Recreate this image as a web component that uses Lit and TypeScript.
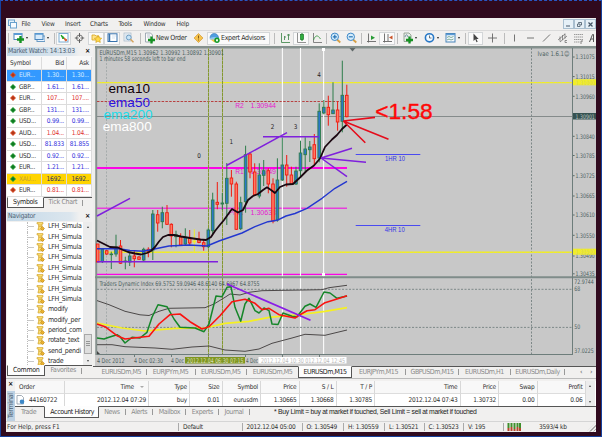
import { LitElement, css, html, nothing, svg } from 'lit';
import type { SVGTemplateResult } from 'lit';
import { customElement } from 'lit/decorators.js';
import { classMap } from 'lit/directives/class-map.js';

type Tool = { icon?: string; w: number; label?: string; pressed?: boolean; drop?: boolean; sep?: boolean };
type Quote = { symbol: string; bid: string; ask: string; up: boolean; mark?: 'selected' | 'gold' };
// x, high, low, body top, body bottom, colour key
type Candle = [number, number, number, number, number, 'g' | 'r' | 'y'];

const ICONS: Record<string, SVGTemplateResult> = {
  newChart: svg`<rect x="1" y="1.5" width="8" height="6" fill="#fff" stroke="#4b86bd"/><rect x="1" y="1" width="8" height="2" fill="#5b9bd5"/><path d="M7.5 4v7M4 7.5h7" stroke="#159222" stroke-width="2.4"/>`,
  profiles: svg`<rect x="3" y="4" width="8" height="5.5" fill="#eaf4ff" stroke="#6b9bc4"/><rect x="1" y="1.5" width="8" height="6" fill="#d8ebfb" stroke="#4b86bd"/><path d="M1 2h8" stroke="#5b9bd5" stroke-width="1.5"/>`,
  market: svg`<rect x="1" y="1.5" width="9" height="8.5" fill="#fff" stroke="#7bacd2"/><path d="M3 3l3 2.5-1 1.5z" fill="#20a020" stroke="#20a020"/><path d="M6 6l3 2-1.5 1z" fill="#d75a2c" stroke="#d75a2c"/>`,
  crosshair: svg`<circle cx="5.5" cy="6" r="3" fill="none" stroke="#666" stroke-width=".9"/><path d="M5.5 1v4M5.5 7v4M.8 6h3.7M6.5 6h3.7" stroke="#555" stroke-width=".9"/>`,
  navigator: svg`<path d="M1 3h3l1 1h3v4H1z" fill="#ffe58a" stroke="#d6a31d" stroke-width=".8"/><path d="M7 3.5l1.2 2.3 2.5.4-1.8 1.8.4 2.5L7 9.3l-2.2 1.2.4-2.5L3.4 6.2l2.5-.4z" fill="#ffd94a" stroke="#cf9a12" stroke-width=".6"/>`,
  terminal: svg`<rect x="1" y="1.8" width="9" height="7.7" fill="#fff" stroke="#3772ad"/><path d="M2.5 2v7.5" stroke="#3772ad" stroke-width="1.5"/><path d="M5 4h4M5 6h3" stroke="#c3d9ec" stroke-width=".7"/>`,
  tester: svg`<rect x="1" y="1" width="7" height="8" fill="#edf3f8" stroke="#a5b8c8" stroke-width=".7"/><path d="M2 5h5M2 3h5M2 7h4" stroke="#b6c9d8" stroke-width=".6"/><circle cx="5.8" cy="5.5" r="2.4" fill="#c8e4f7" stroke="#578db8" stroke-width=".8"/><path d="M7.5 7.3l3 3" stroke="#d5a45c" stroke-width="1.5"/>`,
  order: svg`<path d="M1.5 1h5l2 2v7h-7z" fill="#fafafa" stroke="#8b98a4" stroke-width=".8"/><path d="M3 3h3M3 5h4" stroke="#9ab" stroke-width=".7"/><path d="M7.5 4.5v7M4 8h7" stroke="#159222" stroke-width="2.3"/>`,
  alert: svg`<path d="M5.5 1.5l4.5 4.5-4.5 4.5L1 6z" fill="#f6c34c" stroke="#d49a34" stroke-width=".7"/><path d="M5.5 3.5v3M5.5 7.5v1" stroke="#845c19" stroke-width="1"/>`,
  expert: svg`<path d="M1 6c0-6 8.5-6 8.5 0z" fill="#4f9ee0" stroke="#2d70b5" stroke-width=".6"/><ellipse cx="5" cy="6.5" rx="4.5" ry="1.6" fill="#8ec6ef"/><path d="M1.5 7.5l4 3 2-3z" fill="#f4c646"/><circle cx="8" cy="8.3" r="2.7" fill="#159a2b"/><rect x="7" y="7.3" width="2" height="2" fill="#e9ffe9"/>`,
  bars: svg`<path d="M1.5 1v9.5H10M4.5 8V4M4.5 5h1.5M8.5 8V2M7 3h3" fill="none" stroke="#4b8d55" stroke-width=".9"/>`,
  candles: svg`<path d="M1.5 1v9.5H10" fill="none" stroke="#777" stroke-width=".8"/><path d="M6 1v8" stroke="#177a25"/><rect x="4.5" y="2.5" width="3" height="5" fill="#2eae3e" stroke="#177a25" stroke-width=".7"/>`,
  line: svg`<path d="M1.5 1v9.5H10" fill="none" stroke="#777" stroke-width=".9"/><path d="M1.5 8c2-5 4-5.5 7-1" fill="none" stroke="#3b9a45" stroke-width=".9"/>`,
  zoomIn: svg`<path d="M7 7.5l3.3 3" stroke="#d6a045" stroke-width="1.8"/><circle cx="4.8" cy="4.8" r="3.7" fill="#d5ecfb" stroke="#3d88c8"/><path d="M4.8 2.8v4M2.8 4.8h4" stroke="#2674b5" stroke-width="1.2"/>`,
  zoomOut: svg`<path d="M7 7.5l3.3 3" stroke="#d6a045" stroke-width="1.8"/><circle cx="4.8" cy="4.8" r="3.7" fill="#d5ecfb" stroke="#3d88c8"/><path d="M2.8 4.8h4" stroke="#2674b5" stroke-width="1.2"/>`,
  scroll: svg`<path d="M2.5 1.5v9M1 9.5h9" fill="none" stroke="#666" stroke-width=".9"/><path d="M5 3.5l4 2.2-4 2.2z" fill="#289b36"/>`,
  shift: svg`<path d="M2.5 1.5v9M1 9.5h9M6 2v7" fill="none" stroke="#666" stroke-width=".9"/><path d="M10.5 3.5v4L7 5.5z" fill="#ca5228"/>`,
  indicators: svg`<path d="M2 1h5l2 2v6.5H2z" fill="#e7ede7" stroke="#859585" stroke-width=".8"/><path d="M3 5c1-3 2-3 3 0" fill="none" stroke="#4c6f8b" stroke-width=".7"/><path d="M7.5 4.5v7M4 8h7" stroke="#159222" stroke-width="2.3"/>`,
  clock: svg`<circle cx="5.5" cy="5.8" r="4.1" fill="#f3faff" stroke="#2878c6" stroke-width="1.6"/><path d="M5.5 3.5V6H7.5" fill="none" stroke="#456" stroke-width=".8"/>`,
  template: svg`<rect x="1" y="1.5" width="9" height="8.5" fill="#f4faff" stroke="#4884b8"/><path d="M1 2.5h9" stroke="#5b9bd5" stroke-width="1.5"/><path d="M2 5.5l2-1 2 1 2.5-1M2 8l2-1 2 1 2.5-1" fill="none" stroke="#47886b" stroke-width=".7"/>`,
  cursor: svg`<path d="M3.5 1.5v7.5l1.8-1.7 1.2 3 1.2-.5-1.3-2.8h2.3z" fill="#444"/>`,
  cross: svg`<path d="M5.5 1.5v9M1 6h9" stroke="#666" stroke-width=".9"/>`,
  vline: svg`<path d="M5.5 2.5v7" stroke="#666" stroke-width=".9"/>`,
  hline: svg`<path d="M2 6h7" stroke="#666" stroke-width=".9"/>`,
  trend: svg`<path d="M2 9.5l7-7" stroke="#666" stroke-width=".9"/>`,
  channel: svg`<path d="M1 8l7-6M3 10l7-6M3 4.5v5M5.5 3v5M8 1.5v5" stroke="#666" stroke-width=".7"/><path d="M8 8.5h2M8 10.5h2M8 8.5v2" stroke="#555" stroke-width=".6"/>`,
  fibo: svg`<path d="M1 2.5h9M1 5h9M1 7.5h9M1 10h6" stroke="#777" stroke-width=".7" stroke-dasharray="1.4 .5"/><path d="M8 9v3M8 9h2" stroke="#555" stroke-width=".7"/>`,
  letter: svg`<path d="M1.5 10l3-7.5 1 0v7.5M3 7h2.5" fill="none" stroke="#555"/>`,
};

const TOOLS: Tool[] = [
  { sep: true, w: 4 }, { icon: 'newChart', w: 21, drop: true }, { icon: 'profiles', w: 21, drop: true }, { sep: true, w: 4 },
  { icon: 'market', w: 15, pressed: true }, { icon: 'crosshair', w: 17 }, { icon: 'navigator', w: 16, pressed: true },
  { icon: 'terminal', w: 16, pressed: true }, { icon: 'tester', w: 17 }, { sep: true, w: 6 },
  { icon: 'order', w: 47, label: 'New Order' }, { icon: 'alert', w: 17 }, { icon: 'expert', w: 63, label: 'Expert Advisors', pressed: true },
  { sep: true, w: 8 }, { icon: 'bars', w: 15 }, { icon: 'candles', w: 16, pressed: true }, { icon: 'line', w: 16 }, { sep: true, w: 2 },
  { icon: 'zoomIn', w: 16 }, { icon: 'zoomOut', w: 16 }, { sep: true, w: 4 }, { icon: 'scroll', w: 16 },
  { icon: 'shift', w: 16, pressed: true }, { sep: true, w: 4 }, { icon: 'indicators', w: 21, drop: true },
  { icon: 'clock', w: 22, drop: true }, { icon: 'template', w: 20, drop: true }, { sep: true, w: 6 },
  { icon: 'cursor', w: 15, pressed: true }, { icon: 'cross', w: 19 }, { sep: true, w: 4 }, { icon: 'vline', w: 16 },
  { icon: 'hline', w: 16 }, { icon: 'trend', w: 16 }, { icon: 'channel', w: 16 }, { icon: 'fibo', w: 16 }, { icon: 'letter', w: 14 },
];

const MENU: [string, number][] = [
  ['File', 20], ['View', 23.5], ['Insert', 25], ['Charts', 28.5], ['Tools', 25], ['Window', 33], ['Help', 20],
];

const QUOTES: Quote[] = [
  { symbol: 'EUR...', bid: '1.30...', ask: '1.30...', up: false, mark: 'selected' },
  { symbol: 'GBP...', bid: '1.61...', ask: '1.61...', up: true },
  { symbol: 'EUR...', bid: '107....', ask: '107....', up: false },
  { symbol: 'GBP...', bid: '131....', ask: '131....', up: true },
  { symbol: 'USD...', bid: '0.99...', ask: '0.99...', up: true },
  { symbol: 'AUD...', bid: '1.04...', ask: '1.04...', up: false },
  { symbol: 'USD...', bid: '81.833', ask: '81.855', up: true },
  { symbol: 'USD...', bid: '0.92...', ask: '0.92...', up: true },
  { symbol: 'EUR...', bid: '1.21...', ask: '1.21...', up: true },
  { symbol: 'XAU...', bid: '1692..', ask: '1692..', up: true, mark: 'gold' },
  { symbol: 'EUR...', bid: '0.81...', ask: '0.81...', up: false },
];

const SCRIPTS = [
  ...Array(8).fill('LFH_Simula'), 'modify', 'modify_per', 'period_com', 'rotate_text', 'send_pendi', 'trade',
];

const CANDLES: Candle[] = [
  [97.7, 244, 262, 244, 262, 'r'], [102.3, 248, 263, 249.3, 261.7, 'g'], [106.7, 250, 255, 250.7, 254, 'r'],
  [111.3, 251.7, 269, 254, 254.7, 'g'], [116, 234.7, 256.7, 247.3, 254, 'g'], [120.5, 240, 264, 246, 263.3, 'r'],
  [125.3, 256.7, 269.3, 261, 261.7, 'g'], [129.7, 252.3, 266, 256, 262, 'g'], [134.3, 250, 267.3, 256, 258.7, 'r'],
  [139, 256, 260, 257, 259.3, 'r'], [143.7, 247.7, 261.7, 249.3, 260, 'g'], [148.3, 247.3, 257.3, 249.3, 252, 'r'],
  [152.8, 210, 260, 214, 250, 'g'], [157.7, 210, 231.7, 214.7, 223, 'r'], [162.3, 206.7, 228.3, 212.7, 221.7, 'g'],
  [167, 205, 225, 212.7, 224.3, 'r'], [171.3, 223.3, 247.3, 224.3, 236, 'r'], [176, 230.7, 247.3, 234.7, 236.7, 'g'],
  [180.7, 233.3, 246, 237, 245, 'r'], [185.3, 228.3, 245.3, 237.3, 244, 'g'], [189.7, 230, 245, 238, 243, 'r'],
  [194.3, 229.3, 251.7, 241, 242, 'y'], [199, 231.7, 243.3, 239, 242.5, 'r'], [203.7, 240, 250.7, 242.7, 246.7, 'r'],
  [208.3, 228.3, 248.3, 230, 246.7, 'g'], [212.7, 192.7, 234, 200, 230.7, 'g'], [217.3, 182, 209.3, 202.3, 204.3, 'r'],
  [222.3, 193, 210, 203, 204, 'g'], [226.8, 163, 225, 178.3, 203.3, 'g'], [231.4, 170, 196.7, 178, 184, 'r'],
  [236.3, 181.7, 230, 184, 229.3, 'r'], [240.7, 196.7, 230, 202.7, 228.7, 'g'], [245.6, 145.7, 212.7, 154.7, 201.7, 'g'],
  [250, 152.3, 178.3, 154, 172, 'r'], [254.7, 163.3, 196, 172, 195, 'r'], [259.3, 163.3, 198.3, 175, 196, 'g'],
  [263.7, 160, 186, 170.7, 175.3, 'g'], [268.3, 168.3, 193.3, 170.7, 184, 'r'], [273, 178.3, 223.3, 184, 221, 'r'],
  [277.4, 158.3, 221.7, 180, 220, 'g'], [282.3, 137.3, 181, 165, 180, 'g'], [286.7, 155, 186.7, 165, 175, 'r'],
  [291.4, 166.7, 185, 175, 184, 'r'], [296, 166.7, 185, 171, 184, 'g'], [300.5, 140.7, 176.7, 153, 170.7, 'g'],
  [305.2, 137.3, 171.7, 149, 154.7, 'g'], [309.8, 141, 162, 147, 149.7, 'g'], [314.3, 134, 165.7, 144.7, 158.7, 'r'],
  [319.2, 103.3, 162.3, 111.3, 158, 'g'], [323.8, 100, 114.3, 107.3, 113, 'g'], [328.3, 95.7, 125.7, 107.3, 114.7, 'r'],
  [333, 82.3, 114, 110, 113.7, 'g'], [337.6, 101.3, 130.7, 110, 122, 'r'], [342.3, 60.7, 132.3, 95.3, 121.3, 'g'],
  [346.8, 84.7, 117.3, 95.3, 116.7, 'r'],
];

const EMA_FAST = '97,240.5 104,244 110,247 118,247.5 123,250 128,252 135,253.5 141,254.5 147,253 151,251 155,247 159,241.5 163,237 168,235 174,235 181,236.5 190,238 200,239.5 206,240 211,237 215,231 219,226 224,220 229,213 232,209 238,212.5 243,210 248,200 253,196 258,194 263,190 267,187.3 271,190 275,193 280,187 286,184.5 293,184 300,177.5 307,170.5 314,165.5 320,158.5 325,147 332,139.5 337,135 342,129 347,124.5';
const EMA_SLOW = '97,248.7 119,248.7 130,250.5 143,251.3 152,249.5 169,246 189,245 207,246 219,241 232,236.5 242,233 255,226.7 268,221.7 277,220.3 286,216 295,213.5 307,208.3 322,198.3 335,188.3 347,181.3';

const AXIS: [string, number][] = [
  ['1.31075', 57], ['1.31015', 76.6], ['1.30960', 96.3], ['1.30840', 136.3], ['1.30785', 155.5], ['1.30725', 175.7],
  ['1.30665', 196], ['1.30610', 215], ['1.30550', 235.3], ['1.30490', 256], ['1.30435', 273.8],
];

const CHART_TABS: [string, number][] = [
  ['EURUSDm,M5', 49.5], ['EURJPYm,M5', 49], ['EURUSDm,M5', 51.5], ['EURUSDm,M5', 51], ['EURUSDm,M15', 54],
  ['EURJPYm,M15', 54], ['GBPUSDm,M15', 53], ['EURUSDm,H1', 52], ['EURUSDm,Daily', 54],
];

const ORDER_COLS: [string, string, number][] = [
  ['Order', '44160722', 50], ['Time', '2012.12.04 07:29', 84], ['Type', 'buy', 41], ['Size', '0.01', 32.5],
  ['Symbol', 'eurusdm', 38.5], ['Price', '1.30665', 38.5], ['S / L', '1.30668', 37], ['T / P', '1.30785', 38.5],
  ['Time', '2012.12.04 07:43', 85.5], ['Price', '1.30732', 38.5], ['Swap', '0.00', 38.5], ['Profit', '0.06', 48],
];

const STATUS: [string, number][] = [
  ['For Help, press F1', 173], ['Default', 63.5], ['2012.12.04 05:00', 60], ['O: 1.30549', 41.5], ['H: 1.30559', 41],
  ['L: 1.30521', 39.5], ['C: 1.30523', 39.5], ['V: 195', 40],
];

// Text squeezed to an exact width, centred vertically on y.
const label = (text: string, x: number, y: number, width: number, fill = '#4c5f5f', size = 6.5) => svg`
  <text x=${x} y=${y + size * 0.36} font-size=${size} textLength=${width} lengthAdjust="spacingAndGlyphs" fill=${fill}>${text}</text>`;

@customElement('price-chart')
export class PriceChart extends LitElement {
  static override styles = css`
    :host {
      display: block;
      height: 321px;
    }

    svg {
      display: block;
      font-family: 'DejaVu Sans Condensed', 'DejaVu Sans', sans-serif;
      letter-spacing: 0;
    }

    .arial {
      font-family: 'Liberation Sans', Arial, sans-serif;
    }

    .big {
      stroke: #ff0808;
      stroke-width: 0.4;
    }

    polyline,
    .line {
      fill: none;
      stroke-linejoin: round;
    }
  `;

  protected override render() {
    return html`
      <svg width="503" height="321" viewBox="93 45 503 321">
        <rect x="93" y="45" width="503" height="321" fill="#eeeeec" />
        <rect x="95" y="46" width="501" height="320" fill="#c8c8c8" />
        <path d="M95 47.3H596" stroke="#84908d" stroke-width="2.4" />
        <path d="M96.3 46V355" stroke="#84908d" stroke-width="1.8" />
        ${this.renderGuides()}
        ${this.renderTexts()}
        ${CANDLES.map((c) => this.renderCandle(c))}
        <polyline points=${EMA_SLOW} stroke="#2337cf" stroke-width="1.4" />
        <polyline points=${EMA_FAST} stroke="#1a0710" stroke-width="1.8" />
        ${this.renderDrawings()}
        ${this.renderIndex()}
        ${this.renderAxes()}
      </svg>
    `;
  }

  private renderGuides() {
    return svg`
      <path d="M106.5 49V354" stroke="#a2a8a8" stroke-width=".9" stroke-dasharray="2 1.5" />
      <path d="M531.5 48V354" stroke="#748080" stroke-width=".9" stroke-dasharray="2 1.5" />
      <path d="M97 116.5H572" stroke="#858b8b" />
      <path d="M97 101.5H346" stroke="#b84040" stroke-width="1" stroke-dasharray="2.5 1.3" />
      <path d="M97 82.6H572M97 252.3H572" stroke="#f1ee25" stroke-width="1.4" />
      <path d="M97 82.6H572M97 252.3H572" stroke="#d9d672" stroke-width=".6" stroke-dasharray="1 3" />
      <path d="M97 168H347" stroke="#fb05e6" stroke-width="1.8" />
      <path d="M97 208.2H347" stroke="#e63edb" stroke-width="1.4" />
      <path d="M97 274.4H347" stroke="#fb05e6" stroke-width="1.3" />
      <path d="M208.5 48V354M222.5 48V354" stroke="#83982f" />
      <path d="M208.5 48V354M222.5 48V354" stroke="#a4ad72" stroke-dasharray="1 3" />
      <path d="M282.4 48V354M300.5 48V354M323.6 48V354" stroke="#fbfbfb" stroke-width="1.1" />
      <rect x="322" y="48" width="3" height="3" fill="#fff" />
      <rect x="322" y="273" width="3" height="3" fill="#fff" />
      <path d="M349.5 48h6l-3 3.5z" fill="#5f6868" />
    `;
  }

  private renderTexts() {
    return svg`
      ${label('EURUSDm,M15  1.30962 1.30992 1.30892 1.30901', 99.5, 52.3, 124.5)}
      ${label('1 minutes 58 seconds left to bar end', 99.5, 58.8, 86)}
      ${label('Ivae 1.6.1☺', 537.5, 53.3, 32)}
      <g class="arial">
        ${label('ema10', 108.5, 88.3, 41.5, '#100008', 13.5)}
        ${label('ema50', 108.5, 102, 41.5, '#2a12e0', 13.5)}
        ${label('ema200', 103.5, 114, 49, '#22dcea', 13.5)}
        ${label('ema800', 102.7, 126, 49, '#ffffff', 13.5)}
        ${label('R2', 235.3, 105.8, 8.5, '#e619d0', 6.8)}
        ${label('1.30944', 250.5, 105.8, 25.5, '#e619d0', 6.8)}
        ${label('R1', 235.3, 171.5, 8.5, '#e619d0', 6.8)}
        ${label('1.30749', 250.5, 171.5, 25.5, '#e619d0', 6.8)}
        ${label('Pivot', 229, 212.7, 14, '#e619d0', 6.8)}
        ${label('1.30638', 250.5, 212.7, 25.5, '#e619d0', 6.8)}
        ${label('1HR 10', 385, 158.6, 20, '#3434e4', 6.3)}
        ${label('4HR 10', 384.7, 229.6, 20, '#3434e4', 6.3)}
        <g class="big">${label('<1:58', 375.2, 111.3, 57.5, '#ff0808', 22.5)}</g>
      </g>
      ${label('0', 197.3, 155.5, 3.6, '#222', 6.5)}
      ${label('1', 229.5, 141.5, 3.6, '#222', 6.5)}
      ${label('2', 270.7, 126.5, 3.6, '#222', 6.5)}
      ${label('3', 293.7, 126.5, 3.6, '#222', 6.5)}
      ${label('4', 317.3, 74.5, 3.6, '#222', 6.5)}
    `;
  }

  private renderCandle([x, high, low, top, bottom, key]: Candle) {
    const edge = { g: '#2e7d4b', r: '#f01a10', y: '#f1ee25' }[key];
    const body = { g: '#2b78c8', r: '#ff7a62', y: '#f1ee25' }[key];
    return svg`
      <path d=${`M${x} ${high}V${low}`} stroke=${edge} stroke-width="1" />
      <rect x=${x - 1.3} y=${top} width="2.6" height=${Math.max(0.6, bottom - top)} fill=${body} stroke=${edge} stroke-width=".9" />
    `;
  }

  private renderDrawings() {
    return svg`
      <g class="line" stroke="#7f20dc" stroke-width="1.5">
        <path d="M97 216L130 198.3M226.5 165.5L287 132.7M263 136.7H319M97 261.7H218" />
        <path d="M321 158L352 148.3M321 158L366 162.2M321 158L347 176.7" />
      </g>
      <path class="line" d="M343.3 121L375 117.4M343.3 121L388.5 139.3M343.3 121L365.3 142.8" stroke="#e50d1c" stroke-width="1.6" />
      <path d="M355.7 154.5H420.3M355.7 225.5H420.3" stroke="#4a4af0" />
    `;
  }

  private renderIndex() {
    return svg`
      <path d="M95 277.3H596" stroke="#7f8c8a" stroke-width="2" />
      <path d="M97 289.3H572M97 327.4H572" stroke="#748181" stroke-width=".9" stroke-dasharray="2 1.5" />
      ${label('Traders Dynamic Index 69.5752 59.0946 48.6140 64.6967 64.8755', 99.5, 283.3, 160)}
      <g stroke="#4c4848" stroke-width="1">
        <polyline points="97,300.6 109,304.7 125,311.3 140,314.8 149,315.5 159,311.3 169,308.3 205,307.7 214,304 225,297.3 230,294 240,295 249,292.3 262,290.7 322,289.7 329,287.7 347,285.3" />
        <polyline points="97,344.7 112,344.7 125,346.7 155,348 172,349.3 192,347 209,346 225,350 245,351.3 259,349 272,343.3 292,338 305,334.3 325,335.3 347,330" />
      </g>
      <polyline points="97,323 122,328 145,331 175,328.3 205,328 225,323.3 249,321.3 269,317.3 305,314 325,311.3 347,307.7" stroke="#f5f022" stroke-width="1.7" />
      <polyline points="97,338 104,339 109,337.3 117,334.7 120,336.7 125,343 132,337.3 140,338 147,332.3 152,317.3 158,304.7 167,306.7 174,319 180,327.3 195,328 204,331.7 209,324 216,296 222,296.7 227,287.3 231,286.7 235,307.3 240.7,321.3 245,304 249,298.3 255,310.7 259,313 264,308 269,310.7 272,324 278,324.5 283,313 292,316.3 297,316.7 305,306.3 310,304 316,307.3 324,292 330,293 337,298.3 347,296" stroke="#16862a" stroke-width="1.5" />
      <polyline points="97,324 105,326.7 117,335.7 125,339 149,336.3 159,324 170,314.7 180,314 190,321.7 202,329 209,326.7 220,315.7 232,301.7 245,299.3 255,303.3 262,309.7 269,308.3 279,314.7 295,318 300,314.7 307,310.7 315,309.7 325,302.7 337,299 347,295.7" stroke="#fb1210" stroke-width="1.6" />
      <path d="M227 284L310.5 320.2" stroke="#8a1de6" stroke-width="1.7" />
    `;
  }

  private renderAxes() {
    return svg`
      <path d="M97 354.5H573M572.5 48V355" stroke="#6d7d7b" fill="none" />
      <path d="M97 351l3 3h-3z" fill="#444" />
      <path d="M134.5 355v2M171.5 355v2M208.5 355v2M245.5 355v2M282.5 355v2M319.5 355v2" stroke="#6d7d7b" />
      ${AXIS.map(([text, y]) => svg`<path d=${`M573 ${y}h1.6`} stroke="#5c6d6b" />${label(text, 575.6, y, 19.2, '#4c5f5f', 6.2)}`)}
      <rect x="573" y="79.3" width="23" height="6" fill="#f1ee25" />
      ${label('1.31000', 575.6, 82.8, 19.2, '#d9d36a', 6)}
      <rect x="573" y="248.7" width="23" height="6" fill="#f1ee25" />
      ${label('1.30500', 575.6, 251.4, 19.2, '#d9d36a', 6)}
      <rect x="573" y="113" width="23" height="6.5" fill="#365251" />
      ${label('1.30901', 575.6, 116.3, 19.2, '#b9c4c2', 6.2)}
      ${label('72.9744', 574.3, 281.7, 19.5, '#4c5f5f', 6.2)}
      ${label('68', 574.3, 289.2, 6, '#4c5f5f', 6.2)}
      ${label('50', 574.3, 327, 6, '#4c5f5f', 6.2)}
      ${label('37.0225', 574.3, 351.2, 19.5, '#4c5f5f', 6.2)}
      ${label('4 Dec 2012', 97, 360.3, 27.5)}
      ${label('4 Dec 02:30', 134, 360.3, 29)}
      ${label('4 Dec', 171, 360.3, 13)}
      <rect x="185" y="357" width="60" height="6.5" fill="#7f961f" />
      ${label('2012.12.04 06:30 07:15', 187, 360.3, 56.5, '#d9dfb8')}
      ${label('4 Dec', 246, 360.3, 12)}
      <rect x="258.5" y="357" width="88" height="6.5" fill="#fff" />
      ${label('2012.12.04 10:30 012.12.04 12:45', 261, 360.3, 84, '#b9b9b9')}
    `;
  }
}

@customElement('app-root')
export class AppRoot extends LitElement {
  static override styles = css`
    :host {
      display: block;
      box-sizing: border-box;
      width: 602px;
      height: 437px;
      padding: 17px 5px 4px 5px;
      overflow: hidden;
      background: #300a1e;
      border: 1px solid #16409c;
      border-top: 1px dashed #2856c4;
      font: 6.5px/1 'DejaVu Sans Condensed', 'DejaVu Sans', sans-serif;
      letter-spacing: -0.2px;
      color: #303030;
      white-space: nowrap;
    }

    * {
      box-sizing: border-box;
    }

    .window {
      display: flex;
      flex-direction: column;
      width: 590px;
      height: 414px;
      background: #f1f0ef;
      overflow: hidden;
    }

    .menu {
      display: flex;
      align-items: center;
      height: 12px;
      flex: none;
    }

    .menu > svg {
      margin: 0 5px 0 1.5px;
    }

    .item {
      padding-top: 1px;
    }

    .spacer {
      flex: 1;
    }

    .winbtn {
      display: grid;
      place-items: center;
      width: 11px;
      height: 10px;
      border: 1px solid #a9bfd0;
      background: #e6f0f7;
    }

    .toolbar {
      display: flex;
      align-items: center;
      height: 15px;
      flex: none;
      border-top: 1px solid #dadada;
      overflow: hidden;
    }

    .tool {
      display: flex;
      align-items: center;
      justify-content: center;
      flex: none;
      height: 13px;
    }

    .tool.pressed {
      background: #fafafa;
      border: 1px solid #d3d6d8;
    }

    .tool.labelled {
      justify-content: flex-start;
      gap: 1.5px;
      padding-left: 0.5px;
      font-size: 7px;
      letter-spacing: -0.35px;
    }

    .tool.sep::before {
      content: '';
      width: 1px;
      height: 11px;
      background: #bcbcbc;
    }

    .drop {
      margin-left: 2px;
      border: 1.7px solid transparent;
      border-top: 2px solid #222;
      border-bottom: 0;
    }

    .middle {
      display: flex;
      height: 333px;
      flex: none;
    }

    .side {
      display: flex;
      flex-direction: column;
      width: 87px;
      flex: none;
      padding: 1.5px 1px 0;
    }

    .title {
      display: flex;
      align-items: center;
      justify-content: space-between;
      height: 9px;
      flex: none;
      padding: 1px 2px 0 1px;
      background: linear-gradient(90deg, #c4d9e8, #dce6ee 75%, #f0f0f0 85%);
      color: #4e6274;
      font-size: 6.8px;
      letter-spacing: -0.3px;
    }

    .close {
      color: #111;
      font-weight: bold;
      font-size: 7px;
    }

    .quote {
      display: grid;
      grid-template-columns: 35px 25px 25px;
      height: 11.5px;
      flex: none;
      background: #fff;
      border-bottom: 1px solid #dcdcdc;
      color: #3030dc;
    }

    .quote > span {
      display: flex;
      align-items: center;
      justify-content: flex-end;
      padding-right: 2px;
      border-right: 1px solid #dcdcdc;
    }

    .quote > .sym {
      justify-content: flex-start;
      gap: 3px;
      padding-left: 3px;
      color: #333;
    }

    .quote.head {
      height: 14.5px;
      padding-top: 1px;
      color: #333;
      background: #f8f8f8;
    }

    .quote.down {
      color: #e03030;
    }

    .quote.selected {
      background: #3399ff;
    }

    .quote.selected,
    .quote.selected .sym {
      color: #cfeaff;
    }

    .quote.gold {
      background: #ffd400;
      color: #222c66;
    }

    .quote.gold .sym {
      color: #c4a23c;
    }

    .tabs {
      display: flex;
      height: 11px;
      flex: none;
      border-top: 1px solid #555;
      color: #8a8a8a;
    }

    .tabs > span {
      display: flex;
      align-items: center;
      padding: 0 5px;
      font-size: 7px;
      letter-spacing: -0.32px;
    }

    .tabs .on {
      margin-top: -1px;
      background: #fdfdfd;
      border: 1px solid #555;
      border-top-color: #fdfdfd;
      color: #222;
    }

    .quotes-tabs {
      margin-bottom: 4px;
    }

    .bar {
      width: 1px;
      height: 6px;
      margin: 2px 0 0;
      background: #999;
      flex: none;
    }

    .nav {
      display: flex;
      height: 143px;
      flex: none;
      margin-top: 1px;
      overflow: hidden;
      background: #fff;
    }

    .tree {
      width: 76px;
      padding: 0 0 0 20px;
      overflow: hidden;
    }

    .leaf {
      display: flex;
      align-items: center;
      height: 10.4px;
      font-size: 7px;
      border-left: 1px dotted #bbb;
      letter-spacing: -0.3px;
    }

    .leaf::before {
      content: '';
      width: 6px;
      height: 1px;
      margin-right: 2px;
      flex: none;
      background: #c8c8c8;
    }

    .leaf svg {
      flex: none;
      margin-right: 3px;
    }

    .scroll {
      display: flex;
      flex-direction: column;
      align-items: center;
      width: 9px;
      background: #ececec;
      padding: 4px 0 3px;
    }

    .up,
    .dn {
      border: 1.8px solid transparent;
      border-bottom: 2px solid #444;
      border-top: 0;
    }

    .dn {
      border-top: 2px solid #444;
      border-bottom: 0;
    }

    .thumb {
      display: grid;
      place-items: center;
      width: 8px;
      height: 20px;
      margin: auto 0 6px;
      border: 1px solid #a8a8a8;
      background: #dedede;
    }

    .chart {
      display: flex;
      flex-direction: column;
      width: 503px;
    }

    .chart .tabs {
      height: 12px;
      padding-left: 4px;
    }

    .chart .tabs > span {
      justify-content: center;
      flex: none;
      padding: 0;
      height: 11px;
      letter-spacing: -0.45px;
    }

    .chart .tabs .on {
      height: 12px;
    }

    .chart .tabs > .spacer {
      flex: 1;
    }

    .chart .tabs > .arrow {
      width: 10px;
      color: #555;
    }

    .bottom {
      display: flex;
      height: 43px;
      flex: none;
      border-top: 1px solid #bbb;
    }

    .strip {
      display: flex;
      flex-direction: column;
      align-items: center;
      justify-content: space-between;
      width: 9px;
      padding: 2px 0 0;
    }

    .strip .name {
      display: grid;
      place-items: center;
      width: 8px;
      height: 30px;
      writing-mode: vertical-rl;
      transform: rotate(180deg);
      background: #bdd1e3;
      color: #4e6274;
      font-size: 7px;
    }

    .history {
      width: 581px;
      padding-top: 2px;
    }

    .table {
      display: flex;
      height: 25px;
      background: #fff;
    }

    .col > div {
      display: flex;
      align-items: center;
      justify-content: flex-end;
      height: 12px;
      padding-right: 2px;
      border-right: 1px solid #d8d8d8;
    }

    .col > div:first-child {
      height: 13px;
      background: #f8f8f8;
      border-bottom: 1px solid #ddd;
    }

    .col:first-child > div {
      justify-content: flex-start;
      padding-left: 4px;
    }

    .col:first-child > div + div {
      padding-left: 1px;
      gap: 4px;
    }

    .sort {
      margin: 0 2px 0 6px;
      border: 2px solid transparent;
      border-top: 2.5px solid #aaa;
      border-bottom: 0;
    }

    .history .tabs {
      height: 12px;
    }

    .history .tabs > span {
      padding: 0 5.3px;
      letter-spacing: -0.4px;
    }

    .history .tabs > .hint {
      margin-left: 19px;
      color: #222;
      font-size: 6.8px;
      font-family: 'Liberation Sans', Arial, sans-serif;
      letter-spacing: -0.27px;
    }

    .status {
      display: flex;
      align-items: center;
      height: 11px;
      flex: none;
      border-top: 1px solid #d5d5d5;
      letter-spacing: -0.2px;
    }

    .status > span {
      display: flex;
      align-items: center;
      height: 8px;
      padding-left: 4px;
      border-right: 1px solid #aaa;
      flex: none;
    }

    .status > span:first-child {
      padding-left: 1px;
      letter-spacing: 0;
    }

    .status > svg {
      margin: 0 18px 0 3px;
    }

    .grip {
      margin-left: auto;
      width: 9px;
      height: 9px;
      background: repeating-linear-gradient(135deg, #aaa 0 1px, #f1f0ef 1px 2.5px);
      clip-path: polygon(100% 0, 100% 100%, 0 100%);
    }
  `;

  protected override render() {
    return html`
      <div class="window">
        ${this.renderMenu()}
        <div class="toolbar">${TOOLS.map((tool) => this.renderTool(tool))}</div>
        <div class="middle">
          ${this.renderSide()}
          <div class="chart">
            <price-chart></price-chart>
            <div class="tabs">
              ${CHART_TABS.map(([name, w], i) => html`
                <span class=${classMap({ on: i === 4 })} style=${`width:${w - (i === 3 || i === 4 ? 0 : 1)}px`}>${name}</span>
                ${i === 3 || i === 4 ? nothing : html`<i class="bar"></i>`}
              `)}
              <span class="spacer"></span><span class="arrow">‹</span><span class="arrow">›</span>
            </div>
          </div>
        </div>
        ${this.renderTerminal()}
        ${this.renderStatus()}
      </div>
    `;
  }

  private renderMenu() {
    return html`
      <div class="menu">
        <svg width="9" height="10" viewBox="0 0 9 10">
          <rect x=".5" y="1" width="6" height="5.5" fill="#e5f2fb" stroke="#6aa1cd" />
          <rect x="2.5" y="3.5" width="6" height="5.5" fill="#f7fbff" stroke="#6aa1cd" />
        </svg>
        ${MENU.map(([name, w]) => html`<span class="item" style=${`width:${w}px`}>${name}</span>`)}
        <span class="spacer"></span>
        <span class="winbtn"><svg width="5" height="5"><path d="M0 4h4" stroke="#456" /></svg></span>
        <span class="winbtn"><svg width="5" height="5"><path d="M1.5 1.5V.5h3v2.5h-1M.5 2h2.5v2.5H.5z" fill="none" stroke="#456" stroke-width=".8" /></svg></span>
        <span class="winbtn"><svg width="5" height="5"><path d="M.5.5l4 4M4.5.5l-4 4" stroke="#456" stroke-width="1.2" /></svg></span>
      </div>
    `;
  }

  private renderTool(tool: Tool) {
    const classes = { tool: true, pressed: !!tool.pressed, labelled: !!tool.label, sep: !!tool.sep };
    return html`
      <span class=${classMap(classes)} style=${`width:${tool.w}px`}>
        ${tool.icon ? html`<svg width="11" height="12" viewBox="0 0 11 12">${ICONS[tool.icon]}</svg>` : nothing}
        ${tool.label ? html`<span class="item">${tool.label}</span>` : nothing}
        ${tool.drop ? html`<i class="drop"></i>` : nothing}
      </span>
    `;
  }

  private renderSide() {
    return html`
      <div class="side">
        <div class="title">Market Watch: 14:13:03<span class="close">×</span></div>
        <div class="quote head"><span class="sym">Symbol</span><span>Bid</span><span>Ask</span></div>
        ${QUOTES.map((q) => html`
          <div class=${classMap({ quote: true, down: !q.up && !q.mark, selected: q.mark === 'selected', gold: q.mark === 'gold' })}>
            <span class="sym">
              <svg width="6" height="6" viewBox="0 0 6 6">
                <path d="M3 0L6 3 3 6 0 3z" fill=${q.up ? '#239a35' : '#d9502c'} />
                <path d="M3 1.5v3M1.5 3h3" stroke=${q.up ? '#0d6d1c' : '#a52e12'} />
              </svg>${q.symbol}
            </span>
            <span>${q.bid}</span><span>${q.ask}</span>
          </div>
        `)}
        <div class="tabs quotes-tabs"><span class="on">Symbols</span><span>Tick Chart</span><i class="bar"></i></div>
        <div class="title">Navigator<span class="close">×</span></div>
        <div class="nav">
          <div class="tree">
            ${SCRIPTS.map((name) => html`
              <div class="leaf">
                <svg width="9" height="9" viewBox="0 0 9 9">
                  <path d="M1 .5h6v1.5H6v4.5h1.5V8H2V6.5h.5V2H1z" fill="#fbdc6c" stroke="#cfa02c" stroke-width=".6" />
                  <path d="M3 3h3M3 4.5h3" stroke="#c79b32" stroke-width=".5" />
                  <path d="M6.5 4.5l2 2-2 2-2-2z" fill="#e9b12e" stroke="#b27a15" stroke-width=".5" />
                </svg>${name}
              </div>
            `)}
          </div>
          <div class="scroll">
            <i class="up"></i>
            <i class="thumb"><svg width="4" height="5"><path d="M0 .5h4M0 2.5h4M0 4.5h4" stroke="#777" stroke-width=".7" /></svg></i>
            <i class="dn"></i>
          </div>
        </div>
        <div class="tabs"><span class="on">Common</span><span>Favorites</span><i class="bar"></i></div>
      </div>
    `;
  }

  private renderTerminal() {
    return html`
      <div class="bottom">
        <div class="strip"><span class="close">×</span><span class="name">Terminal</span></div>
        <div class="history">
          <div class="table">
            ${ORDER_COLS.map(([head, value, w], i) => html`
              <div class="col" style=${`width:${w}px`}>
                <div>${head}${i === 1 ? html`<i class="sort"></i>` : nothing}</div>
                <div>
                  ${i === 0 ? html`
                    <svg width="9" height="10" viewBox="0 0 9 10">
                      <path d="M1 .5h4.5l2 2V9H1z" fill="#fff" stroke="#8b98a4" stroke-width=".8" />
                      <circle cx="6" cy="6.7" r="2.3" fill="#3d88c8" />
                    </svg>` : nothing}${value}
                </div>
              </div>
            `)}
            <div class="scroll"><i class="up"></i><span class="spacer"></span><i class="dn"></i></div>
          </div>
          <div class="tabs">
            <span style="width:29px;padding-left:6px">Trade</span>
            <span class="on" style="width:55px">Account History</span>
            <span>News</span><i class="bar"></i>
            <span>Alerts</span><i class="bar"></i>
            <span>Mailbox</span><i class="bar"></i>
            <span>Experts</span><i class="bar"></i>
            <span>Journal</span><i class="bar"></i>
            <span class="hint">* Buy Limit = buy at market if touched, Sell Limit = sell at market if touched</span>
          </div>
        </div>
      </div>
    `;
  }

  private renderStatus() {
    return html`
      <div class="status">
        ${STATUS.map(([text, w]) => html`<span style=${`width:${w}px`}>${text}</span>`)}
        <svg width="14" height="8">
          <path d="M1.5 0v5M4.5 0v4M7.5 0v6M10.5 0v4M13 0v5" stroke="#3f8f2c" stroke-width="2" />
          <path d="M1.5 5v3M4.5 4v4M7.5 6v2M10.5 4v4M13 5v3" stroke="#b5472b" stroke-width="2" />
        </svg>
        3593/4 kb
        <i class="grip"></i>
      </div>
    `;
  }
}
